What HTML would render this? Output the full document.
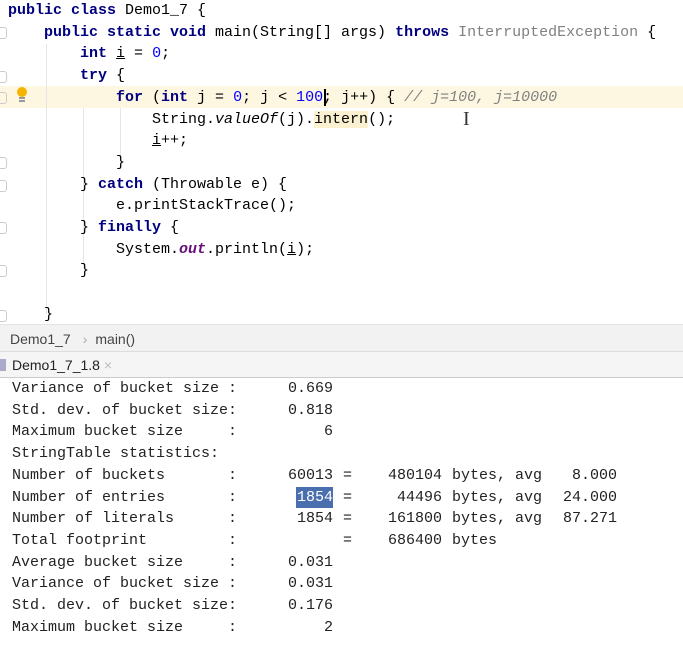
<!DOCTYPE html>
<html><head><meta charset="utf-8"><style>
body{margin:0;width:683px;height:653px;overflow:hidden;background:#fff;position:relative;font-family:"Liberation Mono",monospace}
.code{position:absolute;left:0;top:0;width:683px;font-size:15px;line-height:21.7px;color:#000}
.l{position:absolute;white-space:pre;height:21.7px}
.k{color:#000080;font-weight:bold}
.n{color:#0000ff}
.c{color:#808080;font-style:italic}
.g{color:#808080}
.s{color:#660e7a;font-weight:bold;font-style:italic}
.u{text-decoration:underline}
.hl{position:absolute;left:0;top:86px;width:683px;height:22px;background:#fdf7e2}
.gut{position:absolute;left:0;width:6px;height:10px;border:1px solid #ccc;border-left:none;border-radius:0 3px 3px 0}
.guide{position:absolute;width:1px;background:#e6e6e6}
.bc{position:absolute;left:0;top:324px;width:683px;height:28px;background:#f2f2f2;border-top:1px solid #e4e4e4;border-bottom:1px solid #ddd;font-family:"Liberation Sans",sans-serif;font-size:14px;color:#444;line-height:28px;box-sizing:border-box}
.tab{position:absolute;left:0;top:352px;width:683px;height:26px;background:#f5f5f5;border-bottom:1px solid #ccc;font-family:"Liberation Sans",sans-serif;font-size:14px;color:#222;line-height:26px;box-sizing:border-box}
.con{position:absolute;font-size:15px;color:#222;white-space:pre;line-height:21.7px}
</style></head><body>
<div class="hl"></div>
<div class="guide" style="left:46px;top:44px;height:270px"></div>
<div class="guide" style="left:83px;top:108px;height:160px"></div>
<div class="guide" style="left:120px;top:108px;height:48px"></div>
<div class="gut" style="top:27px"></div>
<div class="gut" style="top:71px"></div>
<div class="gut" style="top:92px"></div>
<div class="gut" style="top:157px"></div>
<div class="gut" style="top:180px"></div>
<div class="gut" style="top:222px"></div>
<div class="gut" style="top:265px"></div>
<div class="gut" style="top:310px"></div>
<svg style="position:absolute;left:15px;top:86px" width="14" height="18"><circle cx="7" cy="6" r="5" fill="#f5b400"/><rect x="4" y="11" width="6" height="2" fill="#999"/><rect x="4" y="14" width="6" height="2" fill="#999"/></svg>
<div class="code">
<div class="l" style="left:8px;top:0"><span class="k">public class</span> Demo1_7 {</div>
<div class="l" style="left:44px;top:21.7px"><span class="k">public static void</span> main(String[] args) <span class="k">throws</span> <span class="g">InterruptedException</span> {</div>
<div class="l" style="left:80px;top:43.4px"><span class="k">int</span> <span class="u">i</span> = <span class="n">0</span>;</div>
<div class="l" style="left:80px;top:65.1px"><span class="k">try</span> {</div>
<div class="l" style="left:116px;top:86.8px"><span class="k">for</span> (<span class="k">int</span> j = <span class="n">0</span>; j &lt; <span class="n">100</span>; j++) { <span class="c">// j=100, j=10000</span></div>
<div style="position:absolute;left:324px;top:89px;width:2px;height:17px;background:#000"></div>
<div class="l" style="left:152px;top:108.5px">String.<i>valueOf</i>(j).<span style="background:#fbf0d0">intern</span>();</div>
<div class="l" style="left:152px;top:130.2px"><span class="u">i</span>++;</div>
<div class="l" style="left:116px;top:151.9px">}</div>
<div class="l" style="left:80px;top:173.6px">} <span class="k">catch</span> (Throwable e) {</div>
<div class="l" style="left:116px;top:195.3px">e.printStackTrace();</div>
<div class="l" style="left:80px;top:217px">} <span class="k">finally</span> {</div>
<div class="l" style="left:116px;top:238.7px">System.<span class="s">out</span>.println(<span class="u">i</span>);</div>
<div class="l" style="left:80px;top:260.4px">}</div>
<div class="l" style="left:44px;top:303.8px">}</div>
</div>
<div style="position:absolute;left:463px;top:108px;font-size:20px;color:#333;font-family:'Liberation Serif',serif">I</div>
<div class="bc"><span style="margin-left:10px">Demo1_7</span><span style="color:#aaa;margin:0 8px 0 12px">›</span>main()</div>
<div class="tab"><span style="display:inline-block;width:6px;height:12px;background:#aac;margin:0 6px 0 0;vertical-align:-1px"></span>Demo1_7_1.8 <span style="color:#bbb">×</span></div>
<div class="con" style="left:12px;top:378px">Variance of bucket size :
Std. dev. of bucket size:
Maximum bucket size     :
StringTable statistics:
Number of buckets       :
Number of entries       :
Number of literals      :
Total footprint         :
Average bucket size     :
Variance of bucket size :
Std. dev. of bucket size:
Maximum bucket size     :</div>
<div style="position:absolute;left:296px;top:487px;width:37px;height:21px;background:#4a6fae"></div>
<div class="con" style="left:288px;top:378px;text-align:right;width:45px">0.669
0.818
6

60013
<span style="color:#fff">1854</span>
1854

0.031
0.031
0.176
2</div>
<div class="con" style="left:343px;top:378px">



=
=
=
=</div>
<div class="con" style="left:380px;top:378px;width:62px;text-align:right">



480104
44496
161800
686400</div>
<div class="con" style="left:452px;top:378px">



bytes, avg
bytes, avg
bytes, avg
bytes</div>
<div class="con" style="left:560px;top:378px;width:57px;text-align:right">



8.000
24.000
87.271</div>
</body></html>
